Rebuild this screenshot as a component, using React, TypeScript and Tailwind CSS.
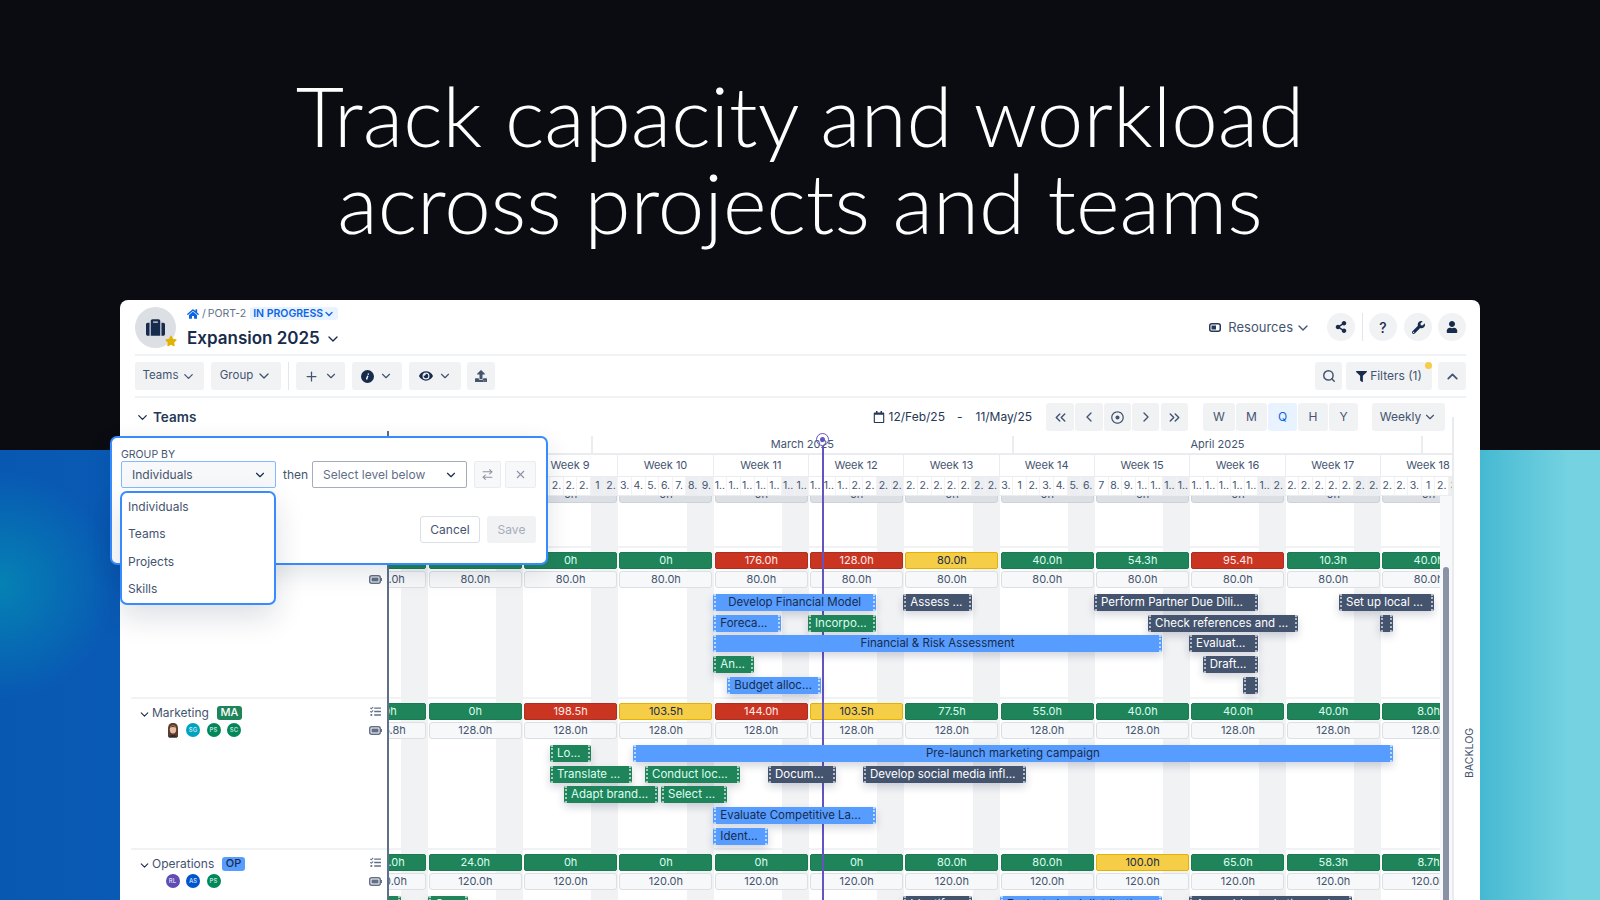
import React from "react";
import { ChevronDown, ChevronUp, ChevronLeft, ChevronRight, ChevronsLeft, ChevronsRight, Plus, Search, X, ArrowRightLeft } from "lucide-react";
import { FaHome, FaSuitcase, FaStar, FaEye, FaUpload, FaShareAlt, FaWrench, FaUser, FaFilter, FaRegCalendar, FaTasks, FaRegDotCircle } from "react-icons/fa";

type Tone = "g" | "r" | "y";
type Bar = { x1: number; x2: number; t: string; c: "b" | "g" | "d" };

const W = [7, 8, 9, 10, 11, 12, 13, 14, 15, 16, 17, 18];
const DAYS: string[][] = [
  ["1..", "1..", "1..", "1..", "1..", "1..", "1.."],
  ["1..", "1..", "1..", "2.", "2.", "2.", "2."],
  ["2.", "2.", "2.", "2.", "2.", "1", "2."],
  ["3.", "4.", "5.", "6.", "7.", "8.", "9."],
  ["1..", "1..", "1..", "1..", "1..", "1..", "1.."],
  ["1..", "1..", "1..", "2.", "2.", "2.", "2."],
  ["2.", "2.", "2.", "2.", "2.", "2.", "2."],
  ["3.", "1", "2.", "3.", "4.", "5.", "6."],
  ["7", "8.", "9.", "1..", "1..", "1..", "1.."],
  ["1..", "1..", "1..", "1..", "1..", "1..", "2."],
  ["2.", "2.", "2.", "2.", "2.", "2.", "2."],
  ["2.", "2.", "3.", "1", "2.", "3.", "4."],
];

const GROUPS: {
  name?: string; code?: string; codeCls?: string; avatars?: { t: string; cls: string }[]; photo?: boolean;
  avail: [string, Tone][]; cap: string[]; lanes: Bar[][]; showList: boolean;
}[] = [
  {
    showList: false,
    avail: [["0h", "g"], ["0h", "g"], ["0h", "g"], ["0h", "g"], ["176.0h", "r"], ["128.0h", "r"], ["80.0h", "y"], ["40.0h", "g"], ["54.3h", "g"], ["95.4h", "r"], ["10.3h", "g"], ["40.0h", "g"]],
    cap: Array(12).fill("80.0h"),
    lanes: [
      [
        { x1: 713.3, x2: 876, t: "Develop Financial Model", c: "b" },
        { x1: 903.3, x2: 971.7, t: "Assess …", c: "d" },
        { x1: 1094, x2: 1257.7, t: "Perform Partner Due Dili…", c: "d" },
        { x1: 1339, x2: 1433.7, t: "Set up local …", c: "d" },
      ],
      [
        { x1: 713.3, x2: 781, t: "Foreca…", c: "b" },
        { x1: 808, x2: 876, t: "Incorpo…", c: "g" },
        { x1: 1148, x2: 1297.7, t: "Check references and …", c: "d" },
        { x1: 1379.7, x2: 1393, t: "", c: "d" },
      ],
      [
        { x1: 713.3, x2: 1161.7, t: "Financial & Risk Assessment", c: "b" },
        { x1: 1189, x2: 1257.7, t: "Evaluat…", c: "d" },
      ],
      [
        { x1: 713.3, x2: 754, t: "An…", c: "g" },
        { x1: 1202.7, x2: 1257.7, t: "Draft…", c: "d" },
      ],
      [
        { x1: 727.3, x2: 821, t: "Budget alloc…", c: "b" },
        { x1: 1243, x2: 1257.7, t: "", c: "d" },
      ],
    ],
  },
  {
    name: "Marketing", code: "MA", codeCls: "bg-[#1f845a] text-white", photo: true, showList: true,
    avatars: [{ t: "SG", cls: "bg-[#00a3bf]" }, { t: "PS", cls: "bg-[#00875a]" }, { t: "SC", cls: "bg-[#00875a]" }],
    avail: [["0h", "g"], ["0h", "g"], ["198.5h", "r"], ["103.5h", "y"], ["144.0h", "r"], ["103.5h", "y"], ["77.5h", "g"], ["55.0h", "g"], ["40.0h", "g"], ["40.0h", "g"], ["40.0h", "g"], ["8.0h", "g"]],
    cap: ["115.8h", ...Array(11).fill("128.0h")],
    lanes: [
      [
        { x1: 550, x2: 590.7, t: "Lo…", c: "g" },
        { x1: 632.5, x2: 1393.3, t: "Pre-launch marketing campaign", c: "b" },
      ],
      [
        { x1: 550, x2: 631.8, t: "Translate …", c: "g" },
        { x1: 645, x2: 740.3, t: "Conduct loc…", c: "g" },
        { x1: 768, x2: 835.7, t: "Docum…", c: "d" },
        { x1: 863, x2: 1026, t: "Develop social media infl…", c: "d" },
      ],
      [
        { x1: 564, x2: 657.5, t: "Adapt brand…", c: "g" },
        { x1: 661, x2: 726.7, t: "Select …", c: "g" },
      ],
      [{ x1: 713.3, x2: 876, t: "Evaluate Competitive La…", c: "b" }],
      [{ x1: 713.3, x2: 767.7, t: "Ident…", c: "b" }],
    ],
  },
  {
    name: "Operations", code: "OP", codeCls: "bg-[#579dff] text-[#172b4d]", showList: true,
    avatars: [{ t: "RL", cls: "bg-[#5e4db2]" }, { t: "AS", cls: "bg-[#0055cc]" }, { t: "PS", cls: "bg-[#00875a]" }],
    avail: [["24.0h", "g"], ["24.0h", "g"], ["0h", "g"], ["0h", "g"], ["0h", "g"], ["0h", "g"], ["80.0h", "g"], ["80.0h", "g"], ["100.0h", "y"], ["65.0h", "g"], ["58.3h", "g"], ["8.7h", "g"]],
    cap: Array(12).fill("120.0h"),
    lanes: [
      [
        { x1: 340, x2: 400.7, t: "", c: "g" },
        { x1: 428, x2: 468, t: "O…", c: "g" },
        { x1: 903.3, x2: 971.7, t: "Identif…", c: "d" },
        { x1: 1000, x2: 1161.7, t: "Evaluate local distributio…", c: "b" },
        { x1: 1189, x2: 1352, t: "Assemble marketing and s…", c: "d" },
      ],
    ],
  },
];

const TONE: Record<Tone, string> = {
  g: "bg-[#1f845a] text-[#dcfff1] border-[#1b7a52]",
  r: "bg-[#ca3521] text-[#ffeceb] border-[#ae2e24]",
  y: "bg-[#f5cd47] text-[#172b4d] border-[#e2b203]",
};
const BAR: Record<Bar["c"], string> = {
  b: "bg-[#579dff] text-[#172b4d]",
  g: "bg-[#1f845a] text-[#dcfff1]",
  d: "bg-[#44546f] text-white",
};

function Btn({ children, cls = "" }: { children: React.ReactNode; cls?: string }) {
  return <div className={`flex h-[28px] items-center justify-center rounded-[3px] bg-[#f1f2f4] text-[12px] text-[#44546f] ${cls}`}>{children}</div>;
}

function Battery() {
  return (
    <svg width="13" height="9" viewBox="0 0 13 9" className="block">
      <rect x="0.75" y="0.75" width="10.5" height="7.5" rx="2" fill="none" stroke="#626f86" strokeWidth="1.5" />
      <rect x="2.5" y="2.5" width="7" height="4" fill="#626f86" />
      <rect x="12" y="3" width="1" height="3" fill="#626f86" />
    </svg>
  );
}

function Photo() {
  return (
    <svg width="14" height="16" viewBox="0 0 14 16" className="block">
      <path d="M2 7C2 2.5 4 1 7 1s5 1.5 5 6v7c0 1-1 1.500-2 1.500H4C3 15.500 2 15 2 14z" fill="#5b3b2c" />
      <ellipse cx="7" cy="7.500" rx="3.200" ry="4" fill="#e7bba0" />
      <path d="M3 15.500c.5-2 2-2.500 4-2.500s3.500.5 4 2.500z" fill="#2d2a33" />
      <path d="M4 5.500C5 3.500 9 3.500 10 5.500 8.500 4.800 5.500 4.800 4 5.500z" fill="#5b3b2c" />
    </svg>
  );
}

function TaskBar({ b }: { b: Bar }) {
  const centered = b.t !== "" && !b.t.includes("…");
  return (
    <div
      className={`absolute top-0 z-20 flex h-[17px] items-center overflow-hidden whitespace-nowrap rounded-[2px] text-[11.500px] shadow-[0_4px_8px_rgba(9,30,66,0.18)] ${BAR[b.c]} ${centered ? "justify-center" : "pl-[7px]"}`}
      style={{ left: b.x1 - 332.3, width: b.x2 - b.x1 }}
    >
      <span className="absolute bottom-0 left-[1px] top-0 border-l-2 border-dotted border-white/60" />
      <span className="absolute bottom-0 right-[1px] top-0 border-r-2 border-dotted border-white/60" />
      {b.t}
    </div>
  );
}

export default function App() {
  return (
    <div className="relative h-[900px] w-[1600px] overflow-hidden bg-[#0a0c12] [font-family:Inter,sans-serif]">
      <div className="absolute inset-x-0 bottom-0 h-[450px] bg-[radial-gradient(circle_at_0%_30%,#0582b4_0,rgba(5,130,180,0)_115px),linear-gradient(90deg,#0858b2_0%,#0a5bb5_10%,#1f90c4_60%,#45b9d2_92.500%,#74d2e1_98%)]" />

      <h1 className="relative pt-[72px] text-center text-[83.500px] font-light leading-[87px] text-white [font-family:Lato,sans-serif]">
        Track capacity and workload
        <br />
        across projects and teams
      </h1>

      <div className="absolute inset-x-[120px] top-[300px] bottom-0 flex flex-col rounded-t-[8px] bg-white text-[#44546f]">
        {/* header */}
        <div className="mx-[15px] mr-[14px] flex h-[56px] shrink-0 items-start border-b-2 border-[#f1f2f4] pt-[7px]">
          <div className="relative flex h-[41px] w-[41px] shrink-0 items-center justify-center rounded-full bg-[#dcdfe4] text-[#172b4d]">
            <FaSuitcase size={19} />
            <FaStar size={12} className="absolute bottom-[1px] right-[-1px] text-[#e2b203]" />
          </div>
          <div className="ml-[11px] flex flex-col">
            <div className="flex h-[13px] items-center text-[10.5px] text-[#626f86]">
              <FaHome size={12} className="text-[#0c66e4]" />
              <span className="ml-[3px]">/</span>
              <span className="ml-[2px]">PORT-2</span>
              <span className="ml-[4px] flex h-[13px] items-center rounded-[3px] bg-[#e9f2ff] px-[3px] font-semibold text-[#0c66e4]">
                IN PROGRESS
                <ChevronDown size={12} strokeWidth={2.5} />
              </span>
            </div>
            <div className="mt-[8px] flex h-[22px] items-center text-[17px] font-semibold text-[#172b4d]">
              Expansion 2025
              <ChevronDown size={16} className="ml-[5px]" />
            </div>
          </div>
          <div className="ml-auto flex items-center pt-[6px]">
            <svg width="13" height="9" viewBox="0 0 13 9" className="mt-[1px]">
              <rect x="0.75" y="0.75" width="10.500" height="7.500" rx="2" fill="none" stroke="#253858" strokeWidth="1.500" />
              <rect x="2.500" y="2.500" width="4.500" height="4" fill="#253858" />
            </svg>
            <span className="ml-[6px] mt-[1px] text-[13px]">Resources</span>
            <ChevronDown size={16} className="ml-[2px] mt-[1px]" />
            <div className="ml-[16px] flex h-[28px] w-[28px] items-center justify-center rounded-full bg-[#f1f2f4] text-[#172b4d]"><FaShareAlt size={12} /></div>
            <div className="ml-[7px] mr-[6px] h-[28px] w-[1px] bg-[#e4e6ea]" />
            <div className="flex h-[28px] w-[28px] items-center justify-center rounded-full bg-[#f1f2f4] text-[14px] font-medium text-[#172b4d]">?</div>
            <div className="ml-[7px] flex h-[28px] w-[28px] items-center justify-center rounded-full bg-[#f1f2f4] text-[#172b4d]"><FaWrench size={13} /></div>
            <div className="ml-[6px] flex h-[28px] w-[28px] items-center justify-center rounded-full bg-[#f1f2f4] text-[#172b4d]"><FaUser size={12} /></div>
          </div>
        </div>

        {/* toolbar */}
        <div className="mx-[15px] mr-[14px] flex h-[42px] shrink-0 items-start border-b-2 border-[#f1f2f4] pt-[6px]">
          <Btn cls="w-[69px] gap-[3px] !text-[11.500px]">Teams<ChevronDown size={15} /></Btn>
          <Btn cls="ml-[7px] w-[70px] gap-[3px] !text-[11.500px]">Group<ChevronDown size={16} /></Btn>
          <div className="ml-[7px] h-[28px] w-[1px] bg-[#e4e6ea]" />
          <Btn cls="ml-[7px] w-[49px] gap-[5px] text-[#172b4d]"><Plus size={15} /><ChevronDown size={14} /></Btn>
          <Btn cls="ml-[7px] w-[50px] gap-[5px]">
            <svg width="13" height="13" viewBox="0 0 13 13"><circle cx="6.500" cy="6.500" r="6.500" fill="#172b4d" /><path d="M7.600 3.500 L7 4.600 M6.800 5.800 L5.500 9.600" stroke="#fff" strokeWidth="1.400" /></svg>
            <ChevronDown size={14} />
          </Btn>
          <Btn cls="ml-[7px] w-[52px] gap-[5px]"><FaEye size={14} className="text-[#172b4d]" /><ChevronDown size={14} /></Btn>
          <Btn cls="ml-[6px] w-[28px] text-[#172b4d]"><FaUpload size={12} /></Btn>
          <Btn cls="ml-auto w-[27px] text-[#172b4d]"><Search size={14} strokeWidth={2.500} /></Btn>
          <div className="relative ml-[4px]">
            <Btn cls="w-[86px] gap-[3px]"><FaFilter size={11} className="text-[#172b4d]" />Filters (1)</Btn>
            <span className="absolute right-[0px] top-[0px] h-[7px] w-[7px] rounded-full bg-[#f5cd47]" />
          </div>
          <Btn cls="ml-[6px] w-[28px] text-[#172b4d]"><ChevronUp size={17} strokeWidth={2.500} /></Btn>
        </div>

        {/* date row */}
        <div className="ml-[15px] mr-[35px] mt-[5px] flex h-[28px] shrink-0 items-center">
          <ChevronDown size={15} className="text-[#172b4d]" />
          <span className="ml-[3px] text-[13.5px] font-semibold text-[#253858]">Teams</span>
          <div className="ml-auto flex items-center text-[12px] text-[#253858]">
            <FaRegCalendar size={12} className="mr-[4px]" />
            <span>12/Feb/25</span>
            <span className="ml-[12px]">-</span>
            <span className="ml-[13px]">11/May/25</span>
          </div>
          <div className="ml-[14px] flex gap-[1px]">
            <Btn cls="w-[28px]"><ChevronsLeft size={17} /></Btn>
            <Btn cls="w-[28px]"><ChevronLeft size={16} /></Btn>
            <Btn cls="w-[27px]"><FaRegDotCircle size={13} /></Btn>
            <Btn cls="w-[27px]"><ChevronRight size={16} /></Btn>
            <Btn cls="ml-[1px] w-[27px]"><ChevronsRight size={17} /></Btn>
          </div>
          <div className="ml-[15px] flex gap-[1px]">
            <Btn cls="w-[32px]">W</Btn>
            <Btn cls="w-[31px]">M</Btn>
            <Btn cls="w-[29px] !bg-[#e9f2ff] !text-[#0c66e4]">Q</Btn>
            <Btn cls="w-[30px]">H</Btn>
            <Btn cls="w-[29px]">Y</Btn>
          </div>
          <Btn cls="ml-[14px] w-[73px] gap-[2px]">Weekly<ChevronDown size={14} /></Btn>
        </div>

        {/* main */}
        <div className="flex min-h-0 flex-1">
          {/* left column */}
          <div className="flex w-[267px] shrink-0 flex-col">
            <div className="ml-[11px] h-[117px] shrink-0 border-b-2 border-[#f1f2f4]" />
            {GROUPS.map((g, i) => (
              <div key={i} className="ml-[11px] flex h-[151px] shrink-0 items-start justify-between border-b-2 border-[#f1f2f4] pt-[6px]">
                <div className="pl-[7px]">
                  {g.name && (
                    <>
                      <div className="flex h-[15px] items-center text-[12px]">
                        <ChevronDown size={13} className="mt-[3px] text-[#172b4d]" />
                        <span className="ml-[1px] text-[#44546f]">{g.name}</span>
                        <span className={`ml-[8px] flex h-[14px] items-center rounded-[3px] px-[3.500px] text-[11px] font-medium ${g.codeCls}`}>{g.code}</span>
                      </div>
                      <div className="ml-[27.500px] mt-[2px] flex h-[16px] items-center gap-[6.500px]">
                        {g.photo && <Photo />}
                        {g.avatars?.map((a, j) => (
                          <span key={j} className={`flex h-[14px] w-[14px] items-center justify-center rounded-full text-[6px] font-semibold leading-none text-white/75 ${a.cls}`}>{a.t}</span>
                        ))}
                      </div>
                    </>
                  )}
                </div>
                <div className="mr-[5px] flex w-[13px] flex-col items-center text-[#626f86]">
                  <div className="flex h-[13px] items-center">{g.showList && <FaTasks size={11} />}</div>
                  <div className="mt-[6px] flex h-[13px] items-center"><Battery /></div>
                </div>
              </div>
            ))}
          </div>
          <div className="w-[2px] shrink-0 bg-[#5f6f88]" />

          {/* timeline */}
          <div className="relative isolate w-[1063px] shrink-0 overflow-hidden">
            <div className="mt-[3px] flex h-[21px] border-b-2 border-[#ebecf0] pt-[2px] text-[11px] text-[#44546f]">
              <div className="w-[201.700px] shrink-0" />
              <div className="flex w-[421.300px] shrink-0 items-center justify-center border-l-2 border-[#ebecf0]">March 2025</div>
              <div className="flex w-[409px] shrink-0 items-center justify-center border-l-2 border-[#ebecf0]">April 2025</div>
              <div className="flex-1 border-l-2 border-[#ebecf0]" />
            </div>
            <div className="ml-[-56.700px] w-[1144px]">
              <div className="flex h-[21px]">
                {W.map((w) => (
                  <div key={w} className="flex w-[95.330px] shrink-0 items-center justify-center border-r border-[#ebecf0] text-[11px]">Week {w}</div>
                ))}
              </div>
              <div className="flex h-[20px] border-y border-[#ebecf0]">
                {W.map((w, i) => (
                  <div key={w} className="flex w-[95.330px] shrink-0">
                    {DAYS[i].map((d, j) => (
                      <div key={j} className={`flex min-w-0 flex-1 items-center justify-center overflow-hidden whitespace-nowrap border-r border-[#f1f2f4] text-[10.500px] ${j > 4 ? "bg-[#eceef1]" : "bg-white"}`}>{d}</div>
                    ))}
                  </div>
                ))}
              </div>
            </div>
            <div className="flex">
              <div className="w-[1051px] shrink-0 overflow-hidden">
                <div className="relative ml-[-56.700px] w-[1144px]">
                  <div className="absolute inset-0 flex">
                    {W.map((w) => (
                      <div key={w} className="flex w-[95.330px] shrink-0 justify-end"><div className="w-[27px] bg-[#f1f2f4]" /></div>
                    ))}
                  </div>
                  <div className="relative z-[1] flex h-[7px] overflow-hidden">
                    {W.map((w) => (
                      <div key={w} className="w-[95.330px] shrink-0 px-[1.200px]">
                        <div className="mt-[-10px] flex h-[17px] items-center justify-center rounded-[3px] border border-[#cdd1d8] bg-[#dcdfe4] text-[11px]">0h</div>
                      </div>
                    ))}
                  </div>
                  <div className="relative h-[45px] border-b-2 border-[#f1f2f4]" />
                  {GROUPS.map((g, gi) => (
                    <div key={gi} className="relative h-[151px] border-b-2 border-[#f1f2f4] pt-[4px]">
                      <div className="relative z-[1] flex h-[17px]">
                        {g.avail.map(([t, tone], i) => (
                          <div key={i} className="w-[95.330px] shrink-0 px-[1.200px]">
                            <div className={`flex h-full items-center justify-center rounded-[2px] border text-[11px] ${TONE[tone]} ${i === 0 ? "pl-[20px]" : ""}`}>{t}</div>
                          </div>
                        ))}
                      </div>
                      <div className="relative z-[1] mt-[2px] flex h-[17px]">
                        {g.cap.map((t, i) => (
                          <div key={i} className="w-[95.330px] shrink-0 px-[1.200px]">
                            <div className={`flex h-full items-center justify-center rounded-[3px] border border-[#dcdfe4] bg-[#f7f8f9] text-[11px] ${i === 0 ? "pl-[20px]" : ""}`}>{t}</div>
                          </div>
                        ))}
                      </div>
                      <div className="mt-[6px]">
                        {g.lanes.map((l, li) => (
                          <div key={li} className="relative h-[20.700px]">
                            {l.map((b, bi) => <TaskBar key={bi} b={b} />)}
                          </div>
                        ))}
                      </div>
                    </div>
                  ))}
                </div>
              </div>
              <div className="w-[12px] shrink-0 bg-[#f7f8f9] pl-[3px] pt-[71px]">
                <div className="h-[400px] w-[6px] rounded-t-[3px] bg-[#8993a5]" />
              </div>
            </div>
            {/* today marker */}
            <div className="absolute bottom-0 left-[432.500px] top-[15px] z-10 w-[2px] bg-[#6554c0]" />
            <div className="absolute left-[427px] top-[2px] z-10 flex h-[13px] w-[13px] items-center justify-center rounded-full border-[1.500px] border-[#6554c0]">
              <span className="h-[5px] w-[5px] rounded-full bg-[#6554c0]" />
            </div>
          </div>

          {/* rail */}
          <div className="mt-[-14px] flex-1 border-l-2 border-[#e9ebee]">
            <div className="ml-[8px] mt-[311px] text-[10.500px] text-[#44546f] [writing-mode:vertical-rl] rotate-180">BACKLOG</div>
          </div>
        </div>

        {/* group by popover */}
        <div className="absolute left-[-10px] top-[136px] z-30 h-[129px] w-[438px] rounded-[7px] border-2 border-[#388bff] bg-white pl-[9px] pr-[10px] pt-[11px] shadow-[0_8px_24px_rgba(9,30,66,0.12)]">
          <div className="h-[12px] text-[10.500px] leading-[12px] text-[#44546f]">GROUP BY</div>
          <div className="flex items-center">
            <div className="flex h-[27px] w-[155px] items-center justify-between rounded-[2px] border border-[#85b8ff] bg-[#f7f8f9] pl-[10px] pr-[8px] text-[12px]">Individuals<ChevronDown size={14} className="text-[#172b4d]" /></div>
            <span className="ml-[7px] w-[29px] text-[12px]">then</span>
            <div className="flex h-[27px] w-[155px] items-center justify-between rounded-[2px] border border-[#a5adba] bg-white pl-[10px] pr-[8px] text-[12px] text-[#626f86]">Select level below<ChevronDown size={14} className="text-[#172b4d]" /></div>
            <div className="ml-[7px] flex h-[27px] w-[27px] items-center justify-center rounded-[2px] border border-[#ebecf0] bg-[#f7f8f9] text-[#8993a5]"><ArrowRightLeft size={13} /></div>
            <div className="ml-[4px] flex h-[27px] w-[31px] items-center justify-center rounded-[2px] border border-[#ebecf0] bg-[#f7f8f9] text-[#8993a5]"><X size={13} /></div>
          </div>
          <div className="mt-[28px] flex justify-end">
            <div className="flex h-[27px] w-[60px] items-center justify-center rounded-[3px] border border-[#dcdfe4] bg-white text-[12px]">Cancel</div>
            <div className="ml-[7px] flex h-[27px] w-[49px] items-center justify-center rounded-[3px] bg-[#f1f2f4] text-[12px] text-[#a5adba]">Save</div>
          </div>
        </div>
        <div className="absolute left-0 top-[191px] z-40 flex h-[114px] w-[156px] flex-col rounded-[7px] border-2 border-[#388bff] bg-white pl-[6px] text-[12px] shadow-[0_12px_30px_rgba(9,30,66,0.14)]">
          {["Individuals", "Teams", "Projects", "Skills"].map((t) => (
            <div key={t} className="flex h-[27.500px] shrink-0 items-center">{t}</div>
          ))}
        </div>
      </div>
    </div>
  );
}
